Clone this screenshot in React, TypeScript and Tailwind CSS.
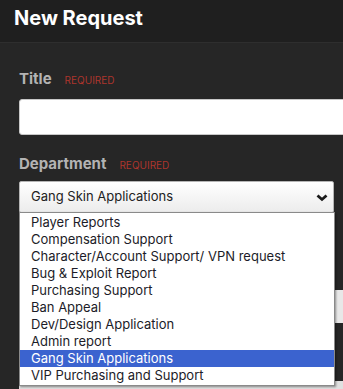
const DEPARTMENTS = [
  "Player Reports",
  "Compensation Support",
  "Character/Account Support/ VPN request",
  "Bug & Exploit Report",
  "Purchasing Support",
  "Ban Appeal",
  "Dev/Design Application",
  "Admin report",
  "Gang Skin Applications",
  "VIP Purchasing and Support",
];

function Label({ text }: { text: string }) {
  return (
    <div className="flex items-baseline gap-[13px]">
      <span className="text-[15px] font-bold text-[#b3b3b3]">{text}</span>
      <span className="text-[10px] text-[#ad352d]">REQUIRED</span>
    </div>
  );
}

export default function App() {
  const selected = "Gang Skin Applications";
  return (
    <div
      className="w-[343px] h-[389px] overflow-hidden bg-[#1f1f1f] text-white"
      style={{ fontFamily: "Inter, 'Liberation Sans', sans-serif" }}
    >
      <div className="h-[42px] px-[14px] pt-[3px]">
        <h1 className="text-[20px] font-bold leading-[30px] text-white">New Request</h1>
      </div>
      <div className="w-[360px] h-[360px] bg-[#262626] border-t border-[#2e2e2e] pl-[19px] pt-[25px]">
        <Label text="Title" />
        <div className="mt-[8px] h-[36px] w-[330px] rounded-[3px] border border-[#c8c8c8] bg-white" />

        <div className="mt-[18px]">
          <Label text="Department" />
        </div>
        <div className="relative mt-[6px]">
          <div className="flex h-[32px] w-[315px] items-center justify-between rounded-[2px] border border-[#b5b5b5] bg-gradient-to-b from-white to-[#ececec] pl-[11px] pr-[5px]">
            <span className="text-[13px] text-[#222]">{selected}</span>
            <svg width="12" height="9" viewBox="0 0 12 9">
              <path d="M1.5 2.5 L6 6.5 L10.5 2.5" fill="none" stroke="#1a1a1a" strokeWidth="2.8" />
            </svg>
          </div>

          <div className="mt-[77px] ml-[316px] h-[33px] w-[40px] bg-[#e8e8e8]" />
          <div className="mt-[58px] h-[20px] w-[330px] bg-[#e0e0e0]" />

          <div className="absolute left-0 top-[31px] w-[316px] border border-[#8a8a8a] bg-white py-[1px] shadow-[1px_1px_2px_rgba(0,0,0,0.4)]">
            {DEPARTMENTS.map((d) => (
              <div
                key={d}
                className={
                  d === selected
                    ? "h-[17px] pl-[11px] text-[13px] leading-[17px] bg-[#3b63cf] text-white"
                    : "h-[17px] pl-[11px] text-[13px] leading-[17px] text-[#1c1c28]"
                }
              >
                {d}
              </div>
            ))}
          </div>
        </div>
      </div>
    </div>
  );
}
